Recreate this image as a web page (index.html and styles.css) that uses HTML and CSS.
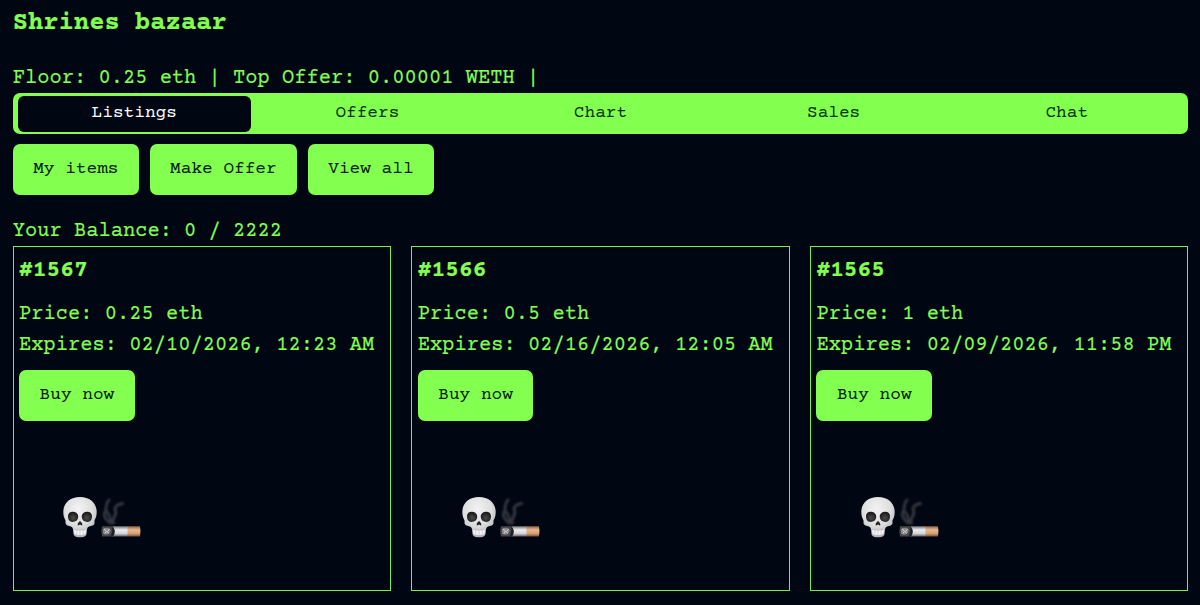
FILE: index.html
```html
<!DOCTYPE html>
<html lang="en">
<head>
<meta charset="utf-8">
<title>Shrines bazaar</title>
<link rel="stylesheet" href="styles.css">
</head>
<body>
<svg width="0" height="0" class="defs" aria-hidden="true">
  <defs>
    <radialGradient id="bone" cx=".45" cy=".3" r=".75"><stop offset="0" stop-color="#f3f3f4"/><stop offset=".55" stop-color="#dededf"/><stop offset="1" stop-color="#acacb0"/></radialGradient>
    <radialGradient id="socket" cx=".5" cy=".6" r=".6"><stop offset="0" stop-color="#4b4b4e"/><stop offset="1" stop-color="#151518"/></radialGradient>
    <linearGradient id="paper" x1="0" y1="0" x2="0" y2="1"><stop offset="0" stop-color="#77777b"/><stop offset=".35" stop-color="#ededf0"/><stop offset=".7" stop-color="#d5d5da"/><stop offset="1" stop-color="#606066"/></linearGradient>
    <linearGradient id="filter" x1="0" y1="0" x2="0" y2="1"><stop offset="0" stop-color="#8a6448"/><stop offset=".35" stop-color="#e9b78d"/><stop offset=".7" stop-color="#d7a277"/><stop offset="1" stop-color="#7a5035"/></linearGradient>
    <filter id="soft" x="-30%" y="-20%" width="160%" height="140%"><feGaussianBlur stdDeviation=".8"/></filter>
    <symbol id="art" viewBox="0 0 80 44">
      <path d="M18 1C8 1 1.300 7 1.300 16c0 4 1 6 2 8 .7 2-.4 3 .8 4.500 1.200 1.500 5 1.500 6.200 3 1.300 1.600.7 5 1.400 7.200 .9 2.200 3 2.600 6.300 2.600s5.400-.4 6.300-2.600c.8-2.200.1-5.600 1.400-7.200 1.300-1.500 5.200-1.500 6.300-3 1.100-1.500 0-2.500.7-4.500 1-2 2-4 2-8C34.700 7 28 1 18 1Z" fill="url(#bone)"/>
      <path d="M6 20c0-3 2.700-4.500 5.300-4.200 3 .3 5.200 2.200 4.900 5.500-.3 3-2.700 4.700-5.700 4.600-3.100-.1-4.500-2.400-4.500-5.900Z" fill="url(#socket)"/>
      <path d="M30 20c0-3-2.700-4.500-5.300-4.200-3 .3-5.200 2.200-4.900 5.500 .3 3 2.700 4.700 5.700 4.600 3.100-.1 4.500-2.400 4.500-5.900Z" fill="url(#socket)"/>
      <path d="M18 25c-1.600 1-2.600 3-2.300 4 .4 1 1.600 0 2.300-.5.700.5 1.900 1.500 2.300.5.300-1-.7-3-2.300-4Z" fill="#232326"/>
      <path d="M12 33.500q6 1.500 12 0l-.6 4.500q-5.400 2-10.800 0Z" fill="#f6f6f8"/>
      <path d="M12 33.500q6 1.500 12 0M14.800 34v4.200M18 34.300v4.500M21.200 34v4.200" stroke="#aaaab1" stroke-width=".5" fill="none"/>
      <g fill="none" stroke-linecap="round" filter="url(#soft)">
        <path d="M48 27C43 23 41 19 43.500 15C45 11 43 8 47 4" stroke="#363941" stroke-width="2.800"/>
        <path d="M44 15C50 19 46 23 50 27" stroke="#363941" stroke-width="2.500"/>
        <path d="M51.500 27C48.500 23 55.500 20 53.500 15C52 11 55 8 60.500 7.500" stroke="#363941" stroke-width="3"/>
      </g>
      <path d="M40 30.300q-1.500 5 0 10.200h12V30.300Z" fill="#48484b"/>
      <path d="M41 33q4-2.500 7 0 1.500 2.500-1.500 5-3 1.500-5.500-.5Z" fill="#88888c"/>
      <path d="m42 33 2.500 2-1.500 2.500M47.500 33l-2 2.500 1 2" stroke="#d8d8da" stroke-width="1" fill="none"/>
      <path d="M51 30.300H66v10.200H51q3-5 0-10.200Z" fill="url(#paper)"/>
      <path d="M49.500 30.300q5.500 4.500 1.500 10.200h-2.500q3-5.500 1-10.200Z" fill="#202023"/>
      <path d="M65.500 30.300H78q1 5 0 10.200H65.500Z" fill="url(#filter)"/>
    </symbol>
  </defs>
</svg>
<main class="page">
  <h1 class="title">Shrines bazaar</h1>
  <p class="stats">Floor: 0.25 eth | Top Offer: 0.00001 WETH |</p>
  <nav class="tabs">
    <a class="tab tab-active">Listings</a><a class="tab">Offers</a><a class="tab">Chart</a><a class="tab">Sales</a><a class="tab">Chat</a>
  </nav>
  <div class="actions">
    <button class="btn">My items</button><button class="btn">Make Offer</button><button class="btn">View all</button>
  </div>
  <p class="balance">Your Balance: 0 / 2222</p>
  <section class="cards">
    <article class="card">
      <h2 class="card-title">#1567</h2>
      <p class="line">Price: 0.25 eth</p>
      <p class="line">Expires: 02/10/2026, 12:23 AM</p>
      <button class="btn buy">Buy now</button>
      <svg class="art"><use href="#art"/></svg>
    </article>
    <article class="card">
      <h2 class="card-title">#1566</h2>
      <p class="line">Price: 0.5 eth</p>
      <p class="line">Expires: 02/16/2026, 12:05 AM</p>
      <button class="btn buy">Buy now</button>
      <svg class="art"><use href="#art"/></svg>
    </article>
    <article class="card">
      <h2 class="card-title">#1565</h2>
      <p class="line">Price: 1 eth</p>
      <p class="line">Expires: 02/09/2026, 11:58 PM</p>
      <button class="btn buy">Buy now</button>
      <svg class="art"><use href="#art"/></svg>
    </article>
  </section>
</main>
</body>
</html>
```
FILE: styles.css
```css
* { box-sizing: border-box; }
body {
  margin: 0;
  background: #010613;
  color: #83ff4f;
  font: 20.430px/31px "Courier Prime", "Liberation Mono", monospace;
  -webkit-text-stroke: 0.150px currentColor;
  overflow: hidden;
}
h1, h2, p { margin: 0; white-space: nowrap; }
.defs { display: block; height: 0; }
.page { padding: 8px 11.700px 0 12.700px; }
.title { font-size: 25.500px; line-height: 31px; }
.stats { margin-top: 24px; }
.tabs {
  display: flex;
  height: 41px;
  margin-top: -1px;
  padding: 2.500px 5px;
  border-radius: 7px;
  background: #83ff4f;
}
.tab {
  flex: 1;
  height: 36px;
  border-radius: 6px;
  color: #06320f;
  font-size: 17.800px;
  line-height: 35px;
  text-align: center;
  -webkit-text-stroke: 0;
}
.tab-active { background: #010613; color: #fff; }
.actions { display: flex; gap: 10.600px; margin-top: 10px; }
.btn {
  display: block;
  height: 51px;
  padding: 0 20.500px 1px;
  border: 0;
  border-radius: 7px;
  background: #83ff4f;
  color: #032010;
  font: inherit;
  font-size: 17.800px;
  white-space: nowrap;
  -webkit-text-stroke: 0;
}
.balance { margin-top: 21px; }
.cards {
  display: grid;
  grid-template-columns: repeat(3, minmax(0, 1fr));
  gap: 20.400px;
  margin-top: -1px;
}
.card { height: 345px; padding: 9px 5px 0 5.400px; border: 1.300px solid #79ed4b; }
.card-title { font-size: 22.900px; line-height: 31px; }
.card-title + .line { margin-top: 12px; }
.buy { margin-top: 9px; }
.art { display: block; width: 80px; height: 44px; margin: 75px 0 0 43.400px; }
```
